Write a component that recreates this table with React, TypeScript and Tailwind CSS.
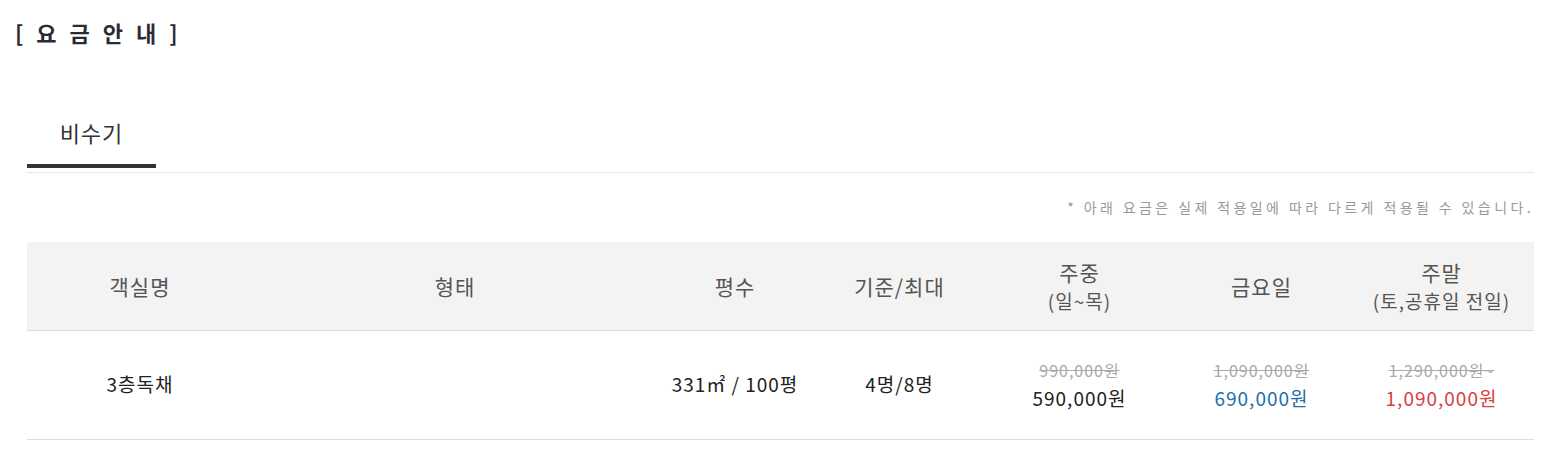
const font = { fontFamily: '"Noto Sans CJK KR", "Noto Sans", sans-serif' };

const cols = "grid grid-cols-[226px_404px_156px_173px_187px_177px_183px]";

export default function App() {
	return (
		<div className="bg-white w-[1561px] h-[454px] text-[#333]" style={font}>
			<div className="pl-[15px] pt-[17px]">
				<h2 className="text-[22px] font-bold leading-[30px] tracking-[4px] text-[#2c2a36]">
					[ 요 금 안 내 ]
				</h2>
			</div>
			<div className="mx-[27px] mt-[66px]">
				<div className="flex border-b border-[#e5e5e5] pb-[4px]">
					<div className="w-[129px] border-b-4 border-[#333] pt-[3px] pb-[16px] text-center text-[22px] leading-[32px] tracking-[1px] text-[#333]">
						비수기
					</div>
				</div>
				<p className="mt-[24px] text-right text-[14px] leading-[20px] tracking-[3.4px] text-[#999]">
					* 아래 요금은 실제 적용일에 따라 다르게 적용될 수 있습니다.
				</p>
				<div className="mt-[25px]">
					<div className={`${cols} h-[89px] bg-[#f3f3f3] border-b border-[#ddd] items-center text-center text-[21px] leading-[28px] tracking-[1px] text-[#555]`}>
						<div>객실명</div>
						<div>형태</div>
						<div>평수</div>
						<div>기준/최대</div>
						<div>
							주중
							<br />
							<span className="text-[19px]">(일~목)</span>
						</div>
						<div>금요일</div>
						<div>
							주말
							<br />
							<span className="text-[19px]">(토,공휴일 전일)</span>
						</div>
					</div>
					<div className={`${cols} h-[109px] border-b border-[#ddd] items-center text-center text-[19px] leading-[28px] tracking-[1px] text-[#222] pb-[3px]`}>
						<div>3층독채</div>
						<div></div>
						<div>331㎡ / 100평</div>
						<div>4명/8명</div>
						<div>
							<div className="line-through text-[16px] text-[#aaa]">990,000원</div>
							<div>590,000원</div>
						</div>
						<div>
							<div className="line-through text-[16px] text-[#aaa]">1,090,000원</div>
							<div className="text-[#1f6fa8]">690,000원</div>
						</div>
						<div>
							<div className="line-through text-[16px] text-[#aaa]">1,290,000원~</div>
							<div className="text-[#d8413f]">1,090,000원</div>
						</div>
					</div>
				</div>
			</div>
		</div>
	);
}
